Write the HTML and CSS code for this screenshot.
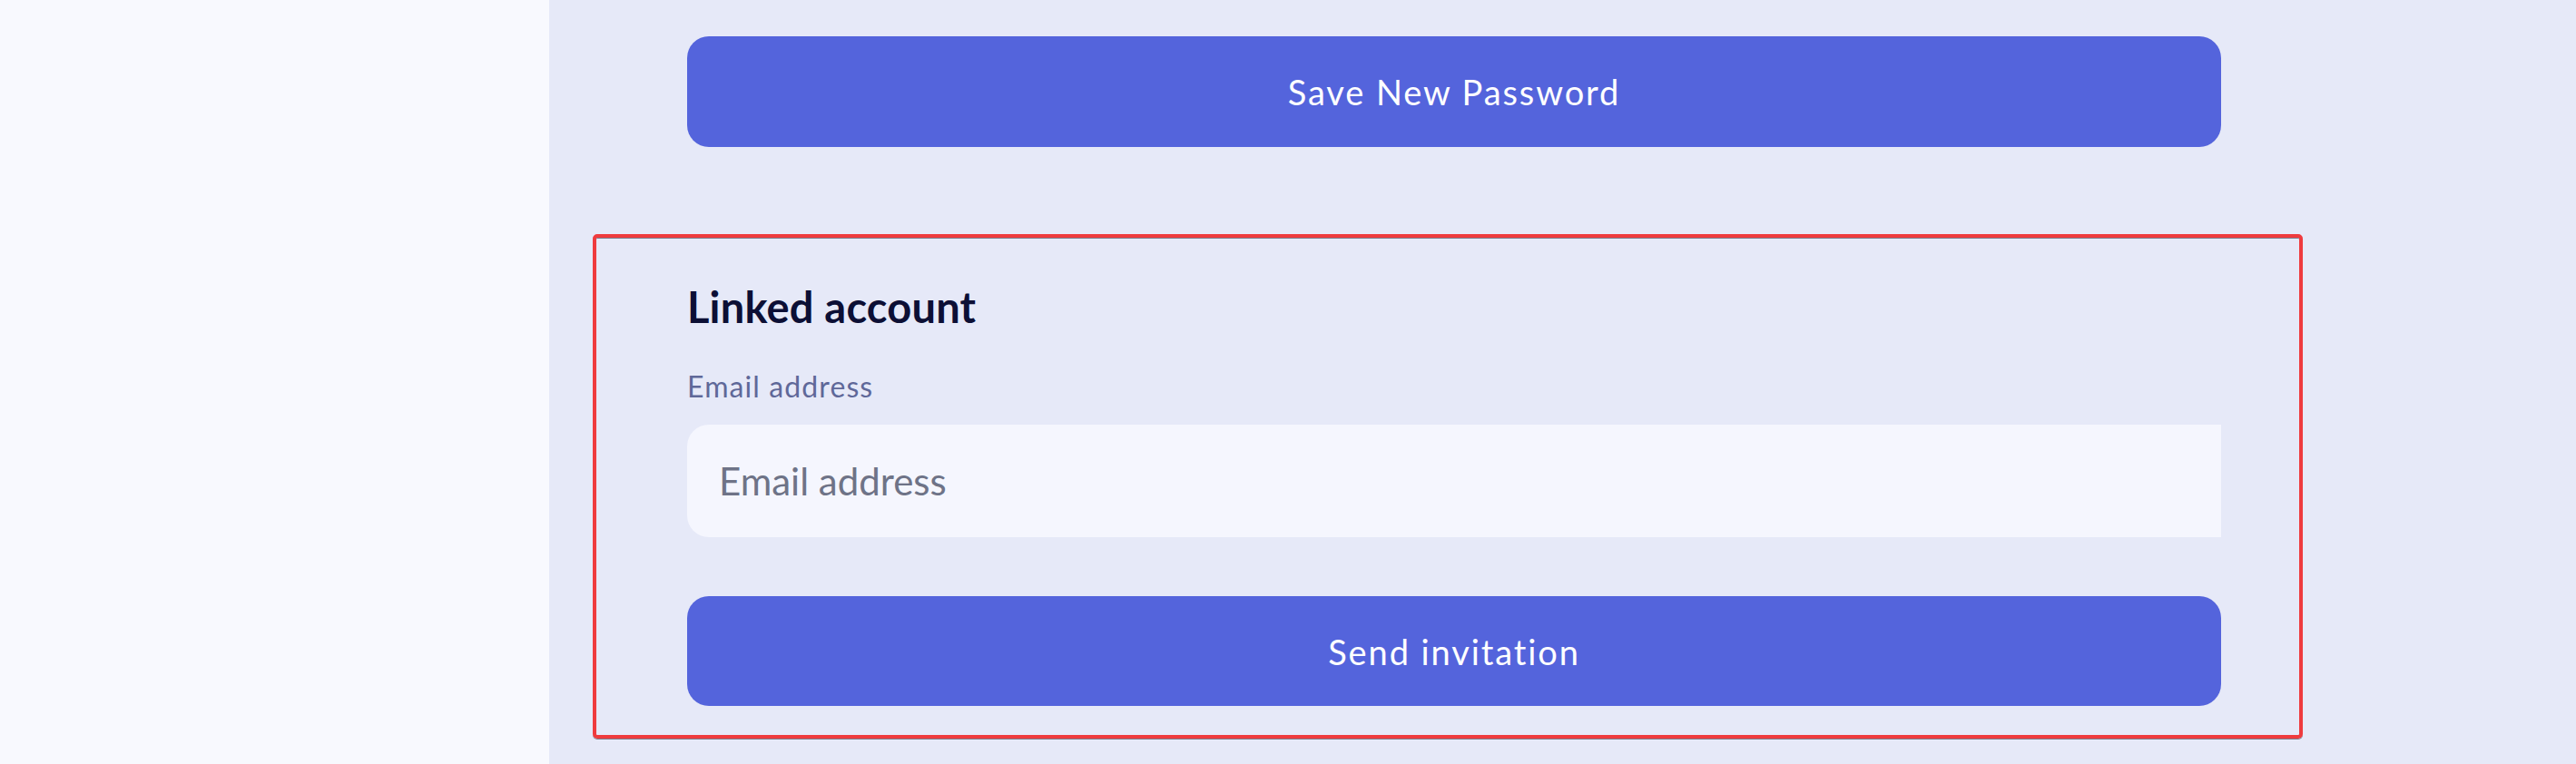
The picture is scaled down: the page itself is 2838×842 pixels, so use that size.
FILE: index.html
```html
<!DOCTYPE html>
<html lang="en">
<head>
<meta charset="utf-8">
<title>Linked account</title>
<link rel="stylesheet" href="styles.css">
</head>
<body>
<div class="layout">
  <aside class="sidebar"></aside>
  <main class="main">
    <div class="save-row">
      <button class="btn-primary" type="button">Save New Password</button>
    </div>
    <section class="linked">
      <h2 class="linked-title">Linked account</h2>
      <label class="field-label" for="email">Email address</label>
      <input class="field-input" id="email" type="email" placeholder="Email address">
      <button class="btn-primary btn-send" type="button">Send invitation</button>
    </section>
  </main>
</div>
</body>
</html>
```

FILE: styles.css
```css
* { box-sizing: border-box; }

html, body {
  margin: 0;
  padding: 0;
  height: 100%;
}

body {
  font-family: "Lato", "Liberation Sans", sans-serif;
  background: #e6e9f8;
  overflow: hidden;
}

.layout {
  display: flex;
  height: 842px;
}

.sidebar {
  width: 605px;
  flex: none;
  background: #f8f9fe;
}

.main {
  flex: 1;
  background: #e6e9f8;
  padding: 40px 0 0 48px;
}

.save-row {
  width: 1884px;
  padding: 0 90px 0 104px;
  margin-bottom: 96px;
}

.btn-primary {
  display: flex;
  align-items: center;
  justify-content: center;
  width: 100%;
  height: 122px;
  border: none;
  border-radius: 24px;
  background: #5464dc;
  color: #ffffff;
  font-family: "Lato", "Liberation Sans", sans-serif;
  font-size: 38px;
  font-weight: 400;
  letter-spacing: 1.9px;
  padding: 0;
  cursor: pointer;
}

.linked {
  width: 1884px;
  border: 4px solid #ef3b3e;
  border-radius: 5px;
  box-shadow: inset 0 1px 0 #7a7d8c, 0 1px 0 #7a7d8c;
  padding: 48px 86px 32px 100px;
  display: flex;
  flex-direction: column;
}

.linked-title {
  margin: 0;
  font-size: 47px;
  line-height: 56px;
  font-weight: 700;
  color: #0c0f35;
  letter-spacing: 0.2px;
}

.field-label {
  margin-top: 40px;
  font-size: 32px;
  line-height: 40px;
  color: #5f6899;
  letter-spacing: 1.1px;
}

.field-input {
  margin-top: 22px;
  width: 100%;
  height: 124px;
  border: none;
  outline: none;
  border-radius: 24px 0 0 24px;
  background: #f5f6fe;
  padding: 0 0 0 35px;
  font-family: "Lato", "Liberation Sans", sans-serif;
  font-size: 42px;
  color: #2a2e45;
}

.field-input::placeholder {
  color: #6e7387;
  opacity: 1;
}

.btn-send {
  margin-top: 65px;
  height: 121px;
}
```
